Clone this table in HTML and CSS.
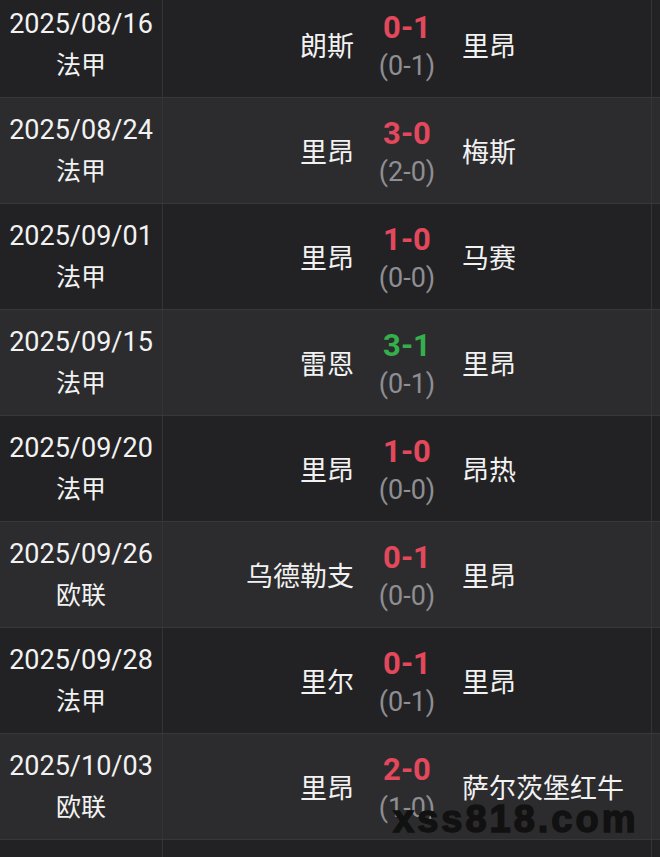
FILE: index.html
```html
<!DOCTYPE html>
<html lang="zh">
<head>
    <meta charset="UTF-8">
    <meta name="viewport" content="width=device-width, initial-scale=1.0">
    <title>赛程</title>
    <link rel="stylesheet" href="styles.css">
</head>
<body>
    <div class="list">
        <div class="row">
            <div class="date"><p>2025/08/16</p><p class="league">法甲</p></div>
            <div class="home">朗斯</div>
            <div class="score"><p class="ft lose">0-1</p><p class="ht">(0-1)</p></div>
            <div class="away">里昂</div>
            <div class="edge"></div>
        </div>
        <div class="row">
            <div class="date"><p>2025/08/24</p><p class="league">法甲</p></div>
            <div class="home">里昂</div>
            <div class="score"><p class="ft lose">3-0</p><p class="ht">(2-0)</p></div>
            <div class="away">梅斯</div>
            <div class="edge"></div>
        </div>
        <div class="row">
            <div class="date"><p>2025/09/01</p><p class="league">法甲</p></div>
            <div class="home">里昂</div>
            <div class="score"><p class="ft lose">1-0</p><p class="ht">(0-0)</p></div>
            <div class="away">马赛</div>
            <div class="edge"></div>
        </div>
        <div class="row">
            <div class="date"><p>2025/09/15</p><p class="league">法甲</p></div>
            <div class="home">雷恩</div>
            <div class="score"><p class="ft win">3-1</p><p class="ht">(0-1)</p></div>
            <div class="away">里昂</div>
            <div class="edge"></div>
        </div>
        <div class="row">
            <div class="date"><p>2025/09/20</p><p class="league">法甲</p></div>
            <div class="home">里昂</div>
            <div class="score"><p class="ft lose">1-0</p><p class="ht">(0-0)</p></div>
            <div class="away">昂热</div>
            <div class="edge"></div>
        </div>
        <div class="row">
            <div class="date"><p>2025/09/26</p><p class="league">欧联</p></div>
            <div class="home">乌德勒支</div>
            <div class="score"><p class="ft lose">0-1</p><p class="ht">(0-0)</p></div>
            <div class="away">里昂</div>
            <div class="edge"></div>
        </div>
        <div class="row">
            <div class="date"><p>2025/09/28</p><p class="league">法甲</p></div>
            <div class="home">里尔</div>
            <div class="score"><p class="ft lose">0-1</p><p class="ht">(0-1)</p></div>
            <div class="away">里昂</div>
            <div class="edge"></div>
        </div>
        <div class="row">
            <div class="date"><p>2025/10/03</p><p class="league">欧联</p></div>
            <div class="home">里昂</div>
            <div class="score"><p class="ft lose">2-0</p><p class="ht">(1-0)</p></div>
            <div class="away">萨尔茨堡红牛</div>
            <div class="edge"></div>
            <span class="mark">xss818.com</span>
        </div>
        <div class="row">
            <div class="date"></div>
            <div class="home"></div>
            <div class="score"></div>
            <div class="away"></div>
            <div class="edge"></div>
        </div>
    </div>
</body>
</html>
```

FILE: styles.css
```css
html,
body {
    height: 857px;
}
body {
    margin: 0;
    background: #222224;
    font-family: Roboto, "Noto Sans CJK SC", sans-serif;
    color: #f2f2f2;
    overflow: hidden;
}
p {
    margin: 0;
}
.list {
    margin-top: -8px;
}
.row {
    position: relative;
    display: grid;
    grid-template-columns: 163px 1fr 88px 1fr 9px;
    height: 106px;
    box-sizing: border-box;
    border-bottom: 1px solid #38383a;
    background: #222224;
}
.row:nth-child(even) {
    background: #2c2c2e;
}
.date {
    display: flex;
    flex-direction: column;
    justify-content: center;
    align-items: center;
    border-right: 1px solid #343436;
    font-size: 27px;
    line-height: 42px;
}
.date .league {
    font-size: 25px;
}
.home,
.away {
    display: flex;
    align-items: center;
    font-size: 27px;
}
.home {
    justify-content: flex-end;
    padding-right: 9px;
}
.away {
    padding-left: 11px;
}
.score {
    display: flex;
    flex-direction: column;
    justify-content: center;
    align-items: center;
    padding-top: 4px;
    line-height: 38px;
}
.score .ft {
    font-size: 31px;
    font-weight: 700;
}
.score .lose {
    color: #e3485c;
}
.score .win {
    color: #33b04b;
}
.score .ht {
    font-size: 27px;
    color: #8e8e93;
}
.edge {
    border-left: 1px solid #343436;
}
.mark {
    position: absolute;
    left: 393px;
    top: 64px;
    font-family: "Liberation Sans", sans-serif;
    font-size: 38px;
    font-weight: 700;
    letter-spacing: 3px;
    color: #111;
    -webkit-text-stroke: 1.5px #111;
}
```
